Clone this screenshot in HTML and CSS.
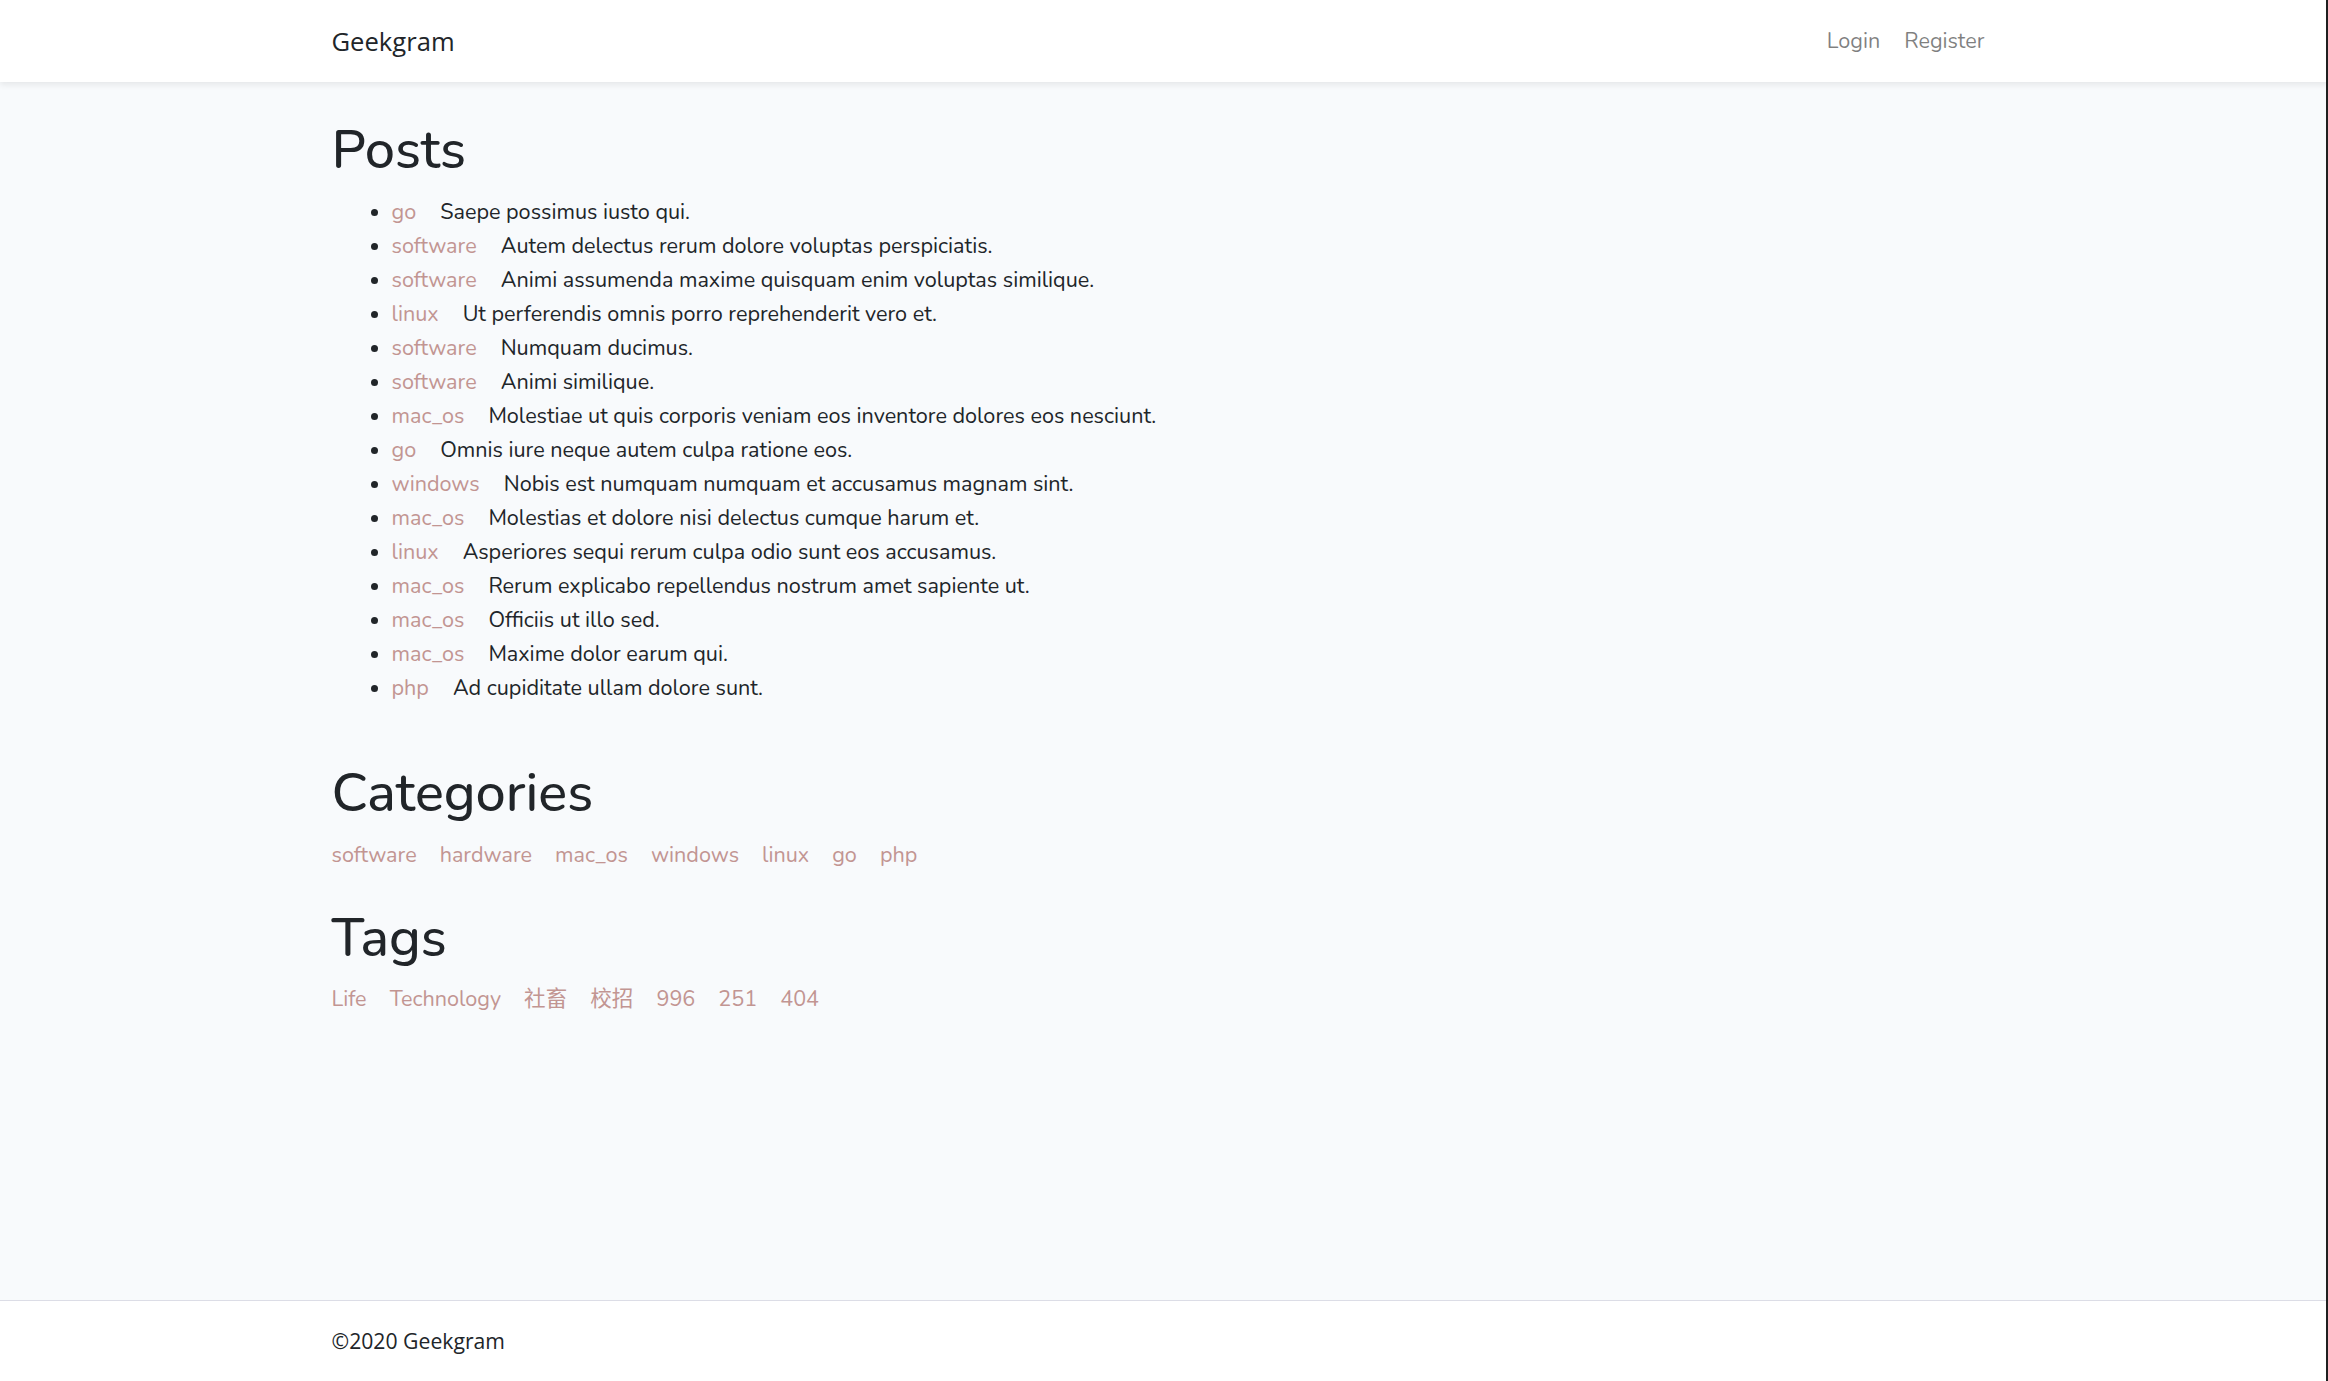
FILE: index.html
```html
<!DOCTYPE html>
<html lang="en">
<head>
<meta charset="utf-8">
<title>Geekgram</title>
<link rel="stylesheet" href="styles.css">
</head>
<body>
<div class="app">
  <nav class="navbar">
    <div class="container nav-inner">
      <a class="brand" href="#">Geekgram</a>
      <ul class="nav-right">
        <li><a class="nav-link" href="#">Login</a></li>
        <li><a class="nav-link" href="#">Register</a></li>
      </ul>
    </div>
  </nav>

  <main class="main">
    <div class="container">
      <h1 class="title">Posts</h1>
      <ul class="posts">
        <li><a href="#" class="cat">go</a><span>Saepe possimus iusto qui.</span></li>
        <li><a href="#" class="cat">software</a><span>Autem delectus rerum dolore voluptas perspiciatis.</span></li>
        <li><a href="#" class="cat">software</a><span>Animi assumenda maxime quisquam enim voluptas similique.</span></li>
        <li><a href="#" class="cat">linux</a><span>Ut perferendis omnis porro reprehenderit vero et.</span></li>
        <li><a href="#" class="cat">software</a><span>Numquam ducimus.</span></li>
        <li><a href="#" class="cat">software</a><span>Animi similique.</span></li>
        <li><a href="#" class="cat">mac_os</a><span>Molestiae ut quis corporis veniam eos inventore dolores eos nesciunt.</span></li>
        <li><a href="#" class="cat">go</a><span>Omnis iure neque autem culpa ratione eos.</span></li>
        <li><a href="#" class="cat">windows</a><span>Nobis est numquam numquam et accusamus magnam sint.</span></li>
        <li><a href="#" class="cat">mac_os</a><span>Molestias et dolore nisi delectus cumque harum et.</span></li>
        <li><a href="#" class="cat">linux</a><span>Asperiores sequi rerum culpa odio sunt eos accusamus.</span></li>
        <li><a href="#" class="cat">mac_os</a><span>Rerum explicabo repellendus nostrum amet sapiente ut.</span></li>
        <li><a href="#" class="cat">mac_os</a><span>Officiis ut illo sed.</span></li>
        <li><a href="#" class="cat">mac_os</a><span>Maxime dolor earum qui.</span></li>
        <li><a href="#" class="cat">php</a><span>Ad cupiditate ullam dolore sunt.</span></li>
      </ul>

      <h1 class="title">Categories</h1>
      <div class="links categories">
        <a href="#">software</a>
        <a href="#">hardware</a>
        <a href="#">mac_os</a>
        <a href="#">windows</a>
        <a href="#">linux</a>
        <a href="#">go</a>
        <a href="#">php</a>
      </div>

      <h1 class="title">Tags</h1>
      <div class="links">
        <a href="#">Life</a>
        <a href="#">Technology</a>
        <a href="#">社畜</a>
        <a href="#">校招</a>
        <a href="#">996</a>
        <a href="#">251</a>
        <a href="#">404</a>
      </div>
    </div>
  </main>

  <footer class="footer">
    <div class="container">©2020 Geekgram</div>
  </footer>
</div>
</body>
</html>
```

FILE: styles.css
```css
html, body {
  margin: 0;
  padding: 0;
}

body {
  background: #f8fafc;
  font-family: "Nunito", Lato, "Noto Sans CJK SC", sans-serif;
  font-size: 21.6px;
  line-height: 1.6;
  color: #212529;
}

/* dark window edge on the far right, drawn over the page */
body::after {
  content: "";
  position: fixed;
  top: 0;
  right: 0;
  width: 2px;
  height: 100%;
  background: #1f1f1f;
  z-index: 10;
}

.app {
  min-height: 100vh;
  display: flex;
  flex-direction: column;
  background: #f8fafc;
}

a {
  text-decoration: none;
}

.container {
  width: 1710px;
  box-sizing: border-box;
  padding: 0 22.5px;
  margin: 0 auto;
}

/* Navbar */
.navbar {
  background: #fff;
  height: 82px;
  box-shadow: 0 3px 6px rgba(0, 0, 0, 0.075);
  position: relative;
  z-index: 1;
  display: flex;
  align-items: center;
}

.nav-inner {
  display: flex;
  align-items: center;
  justify-content: space-between;
}

.brand {
  font-family: "Open Sans", "Noto Sans", sans-serif;
  font-size: 25.6px;
  color: #212529;
  line-height: 43px;
}

.nav-right {
  list-style: none;
  margin: 0;
  padding: 0;
  display: flex;
}

.nav-link {
  display: block;
  padding: 0 12px;
  color: rgba(0, 0, 0, 0.5);
}

/* Main */
.main {
  flex: 1;
  padding: 36px 0;
}

.title {
  font-size: 54px;
  font-weight: 500;
  line-height: 1.2;
  margin: 0 0 12px;
}

.posts {
  margin: 0 0 56px;
  padding-left: 60px;
  line-height: 34px;
}

.posts .cat {
  margin-right: 24px;
}

.cat,
.links a {
  color: #c29592;
}

.links {
  display: flex;
  flex-wrap: wrap;
  gap: 23px;
  line-height: 34px;
  margin-bottom: 34px;
}

/* Footer */
.footer {
  background: #fff;
  border-top: 1.5px solid #dcdde6;
  height: 80px;
  display: flex;
  align-items: center;
  font-family: "Open Sans", "Noto Sans", sans-serif;
  font-size: 21.2px;
}
```
